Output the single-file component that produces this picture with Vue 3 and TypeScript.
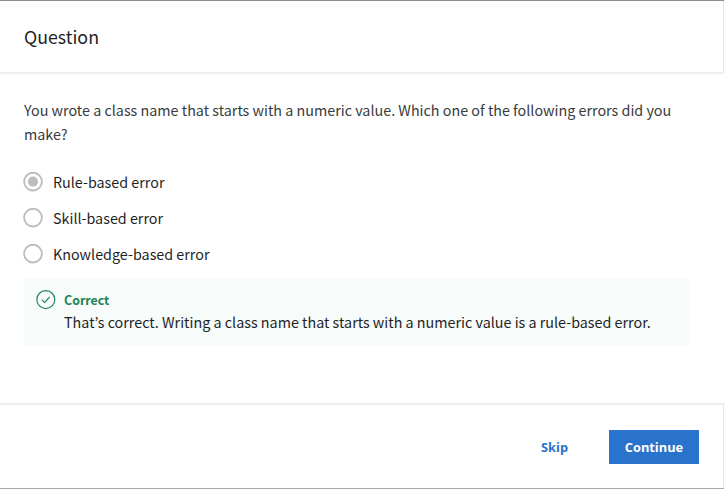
<script setup lang="ts">
import { ref } from 'vue'

const options: string[] = ['Rule-based error', 'Skill-based error', 'Knowledge-based error']
const selected = ref<number>(0)
</script>

<template>
  <main class="dialog">
    <header class="header"><h1 class="title">Question</h1></header>
    <section class="body">
      <p class="prompt">You wrote a class name that starts with a numeric value. Which one of the following errors did you<br>make?</p>
      <div class="options" role="radiogroup">
        <div v-for="(option, i) in options" :key="option" class="option" role="radio" :aria-checked="selected === i">
          <svg class="radio" viewBox="0 0 20 20" width="20" height="20">
            <circle cx="10" cy="9.6" r="8.9" fill="none" stroke="#bdbdbd" stroke-width="1.9" />
            <circle v-if="selected === i" cx="10" cy="9.6" r="5" fill="#bdbdbd" />
          </svg>
          <span class="label">{{ option }}</span>
        </div>
      </div>
      <div class="feedback">
        <svg class="check" viewBox="0 0 20 20" width="20" height="20" fill="none" stroke="#1f8354">
          <circle cx="9.8" cy="9.6" r="9" stroke-width="1.15" />
          <path d="M5.8 9.9 8.7 12.5 13.7 6.8" stroke-width="1.15" />
        </svg>
        <div class="message">
          <strong class="verdict">Correct</strong>
          <p class="explain">That’s correct. Writing a class name that starts with a numeric value is a rule-based error.</p>
        </div>
      </div>
    </section>
    <footer class="footer">
      <button class="skip" type="button">Skip</button>
      <button class="continue" type="button">Continue</button>
    </footer>
  </main>
</template>

<style>
body {
  background: #fff;
}
</style>

<style scoped>
.dialog {
  box-sizing: border-box;
  width: 724px;
  height: 489px;
  display: flex;
  flex-direction: column;
  border-top: 1px solid #8c8c8c;
  border-bottom: 1px solid #a8a8a8;
  font-family: "Noto Sans CJK KR", "Noto Sans", sans-serif;
  font-size: 14.33px;
  color: #1f1f1f;
}
.header {
  box-sizing: border-box;
  height: 73px;
  padding: 19px 24px;
  border-bottom: 2px solid #efefef;
  border-right: 1px solid #e5e5e5;
}
.title {
  margin: 0;
  font-size: 17.8px;
  line-height: 32px;
  font-weight: 400;
}
.body {
  box-sizing: border-box;
  flex: 1;
  padding: 24px 35px 0 24px;
}
.prompt {
  margin: 0;
  line-height: 24px;
  color: #373a3c;
  white-space: nowrap;
}
.options {
  display: flex;
  flex-direction: column;
  gap: 16px;
  margin-top: 26px;
}
.option {
  display: flex;
  align-items: center;
  gap: 10px;
  height: 20px;
  margin-left: -1px;
}
.radio {
  flex: none;
}
.label {
  line-height: 22px;
}
.feedback {
  box-sizing: border-box;
  display: flex;
  gap: 8px;
  height: 68px;
  margin-top: 14px;
  padding: 12px;
  background: #f7fbfa;
}
.check {
  flex: none;
}
.message {
  display: flex;
  flex-direction: column;
}
.verdict {
  font-size: 12.4px;
  line-height: 20px;
  color: #1f8354;
}
.explain {
  margin: 0;
  line-height: 24px;
  white-space: nowrap;
}
.footer {
  box-sizing: border-box;
  height: 85px;
  display: flex;
  justify-content: flex-end;
  align-items: center;
  padding-right: 24px;
  border-top: 2px solid #eee;
  border-right: 1px solid #e5e5e5;
}
.skip,
.continue {
  height: 34px;
  padding: 0;
  border: 0;
  font: 700 12.8px/34px "Open Sans", sans-serif;
}
.skip {
  width: 28px;
  margin-right: 40px;
  background: transparent;
  color: #2a73cc;
  text-align: left;
}
.continue {
  width: 90px;
  background: #2a73cc;
  color: #fff;
}
</style>
